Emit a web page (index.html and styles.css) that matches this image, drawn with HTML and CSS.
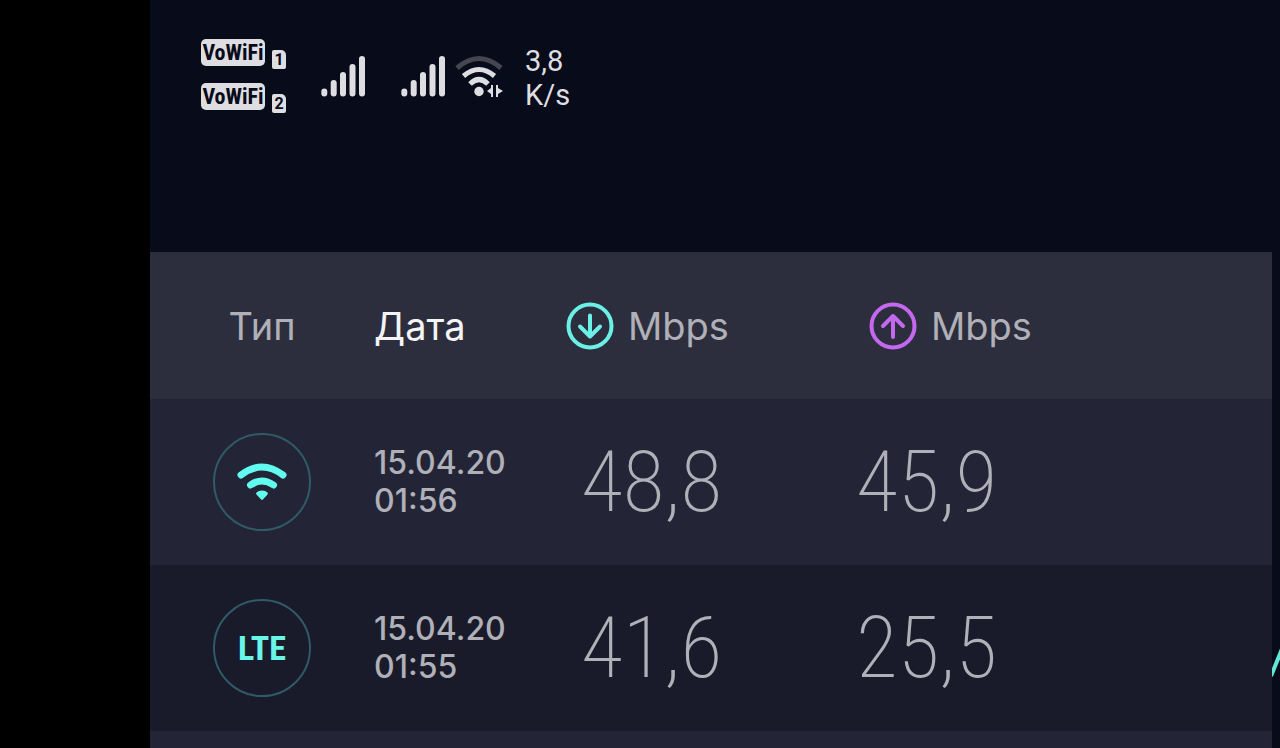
FILE: index.html
```html
<!DOCTYPE html>
<html lang="ru">
<head>
<meta charset="utf-8">
<meta name="viewport" content="width=device-width, initial-scale=1">
<title>Результаты</title>
<link rel="stylesheet" href="styles.css">
</head>
<body>
<div class="screen">
  <header class="status">
    <div class="vowifi">
      <div class="vowifi-row"><span class="vowifi-badge">VoWiFi</span><span class="sim">1</span></div>
      <div class="vowifi-row"><span class="vowifi-badge">VoWiFi</span><span class="sim">2</span></div>
    </div>
    <svg class="signal" viewBox="0 0 46 44" aria-hidden="true">
      <path d="M3.300 36.500v2M12.700 28v10.500M22 20v18.500M31.500 12v26.500M41 4v34.500"/>
    </svg>
    <svg class="signal" viewBox="0 0 46 44" aria-hidden="true">
      <path d="M3.300 36.500v2M12.700 28v10.500M22 20v18.500M31.500 12v26.500M41 4v34.500"/>
    </svg>
    <svg class="net-wifi" viewBox="0 0 50 44" aria-hidden="true">
      <path class="faint" d="M2 13Q24-6 46 13"/>
      <path d="M8.500 21Q24 8 39.500 21M15 29Q24 20 33 29"/>
      <circle cx="24" cy="36.500" r="4.700"/>
      <path class="solid" d="M38 30v12h-2v-3l-4-3 4-3v-3zM41 30l2 0v3l5 3-5 3v3h-2z"/>
    </svg>
    <div class="speed">3,8<br>K/s</div>
  </header>
  <main class="panel">
    <table class="results">
      <colgroup><col class="c-type"><col class="c-date"><col class="c-down"><col></colgroup>
      <thead>
        <tr>
          <th class="type" scope="col">Тип</th>
          <th class="sorted" scope="col">Дата</th>
          <th scope="col">
            <span class="unit"><svg class="arrow down" viewBox="0 0 48 48" aria-label="Загрузка"><circle cx="24" cy="24" r="21.500"/><path d="M24 13.500v20M14 24.500l10 10 10-10"/></svg>Mbps</span>
          </th>
          <th class="up-cell" scope="col">
            <span class="unit"><svg class="arrow up" viewBox="0 0 48 48" aria-label="Отдача"><circle cx="24" cy="24" r="21.500"/><path d="M24 35v-20M14 24l10-10 10 10"/></svg>Mbps</span>
          </th>
        </tr>
      </thead>
      <tbody>
        <tr>
          <td class="type"><span class="ring"><svg class="ring-wifi" viewBox="0 0 50 40" aria-label="Wi-Fi"><path d="M4 13Q25-3 46 13M13.500 23Q25 15 36.500 23"/><path class="solid" d="M25 28.500q3.500 0 5.500 2 1 1-.2 2.200l-4.200 4.600q-1.100 1.200-2.200 0l-4.200-4.600q-1.200-1.200-.2-2.200 2-2 5.500-2z"/></svg></span></td>
          <td class="date">15.04.20<br>01:56</td>
          <td class="value down-value">48,8</td>
          <td class="value">45,9</td>
        </tr>
        <tr class="alt">
          <td class="type"><span class="ring">LTE</span></td>
          <td class="date">15.04.20<br>01:55</td>
          <td class="value down-value">41,6</td>
          <td class="value">25,5</td>
        </tr>
      </tbody>
    </table>
    <svg class="trace" viewBox="0 0 8 36" aria-hidden="true"><path d="M-1 34L12 2"/></svg>
  </main>
</div>
</body>
</html>
```
FILE: styles.css
```css
* {
  box-sizing: border-box;
}

body {
  margin: 0;
  background: #000;
  color: #b0b0b8;
  font-family: Inter, "Noto Sans", sans-serif;
}

.screen {
  display: flex;
  flex-direction: column;
  min-height: 100vh;
  margin-left: 150px;
  background: #080b19;
}

.status {
  display: flex;
  align-items: flex-start;
  height: 252px;
  padding: 39px 51px;
  color: #dedee2;
}

.vowifi {
  display: grid;
  gap: 14px;
  width: 120px;
}

.vowifi-row {
  display: flex;
  align-items: flex-end;
  gap: 7px;
  height: 30px;
}

.vowifi-badge {
  align-self: flex-start;
  width: 64px;
  height: 27px;
  border-radius: 5px;
  background: #dedee2;
  color: #080b19;
  font: 700 22px/27px "Roboto Condensed", Roboto, sans-serif;
  text-align: center;
}

.sim {
  width: 14px;
  height: 19px;
  border-radius: 2px 5px 2px 2px;
  background: #dedee2;
  color: #080b19;
  font: 700 16px/19px Roboto, sans-serif;
  text-align: center;
}

.signal {
  width: 46px;
  height: 44px;
  margin: 16px 34px 0 0;
  fill: none;
  stroke: #dedee2;
  stroke-width: 6;
  stroke-linecap: round;
}

.signal + .signal {
  margin-right: 8px;
}

.net-wifi {
  width: 50px;
  height: 44px;
  margin: 16px 20px 0 0;
  fill: none;
  stroke: #dedee2;
  stroke-width: 5;
}

.net-wifi .faint {
  stroke: #44454f;
}

.net-wifi circle,
.net-wifi .solid {
  fill: #dedee2;
  stroke: none;
}

.speed {
  padding-top: 5px;
  font: 400 29px/34px Roboto, sans-serif;
}

.panel {
  position: relative;
  flex: 1;
  margin-right: 8px;
  background: #232436;
}

.results {
  width: 100%;
  border-collapse: collapse;
  table-layout: fixed;
}

.c-type {
  width: 224px;
}

.c-date {
  width: 192px;
}

.c-down {
  width: 290px;
}

.results th,
.results td {
  padding: 0;
  text-align: left;
}

.results th {
  height: 147px;
  background: #2d2e3d;
  font-size: 38px;
  font-weight: 400;
}

.results td {
  height: 166px;
}

.alt {
  background: #1a1b2a;
}

.results .type {
  text-align: center;
}

.results .sorted {
  color: #f4f4f6;
}

.results .up-cell {
  padding-left: 13px;
}

.unit {
  display: flex;
  align-items: center;
  gap: 14px;
}

.arrow {
  width: 48px;
  height: 48px;
  fill: none;
  stroke-width: 4;
  stroke-linecap: round;
  stroke-linejoin: round;
}

.down {
  stroke: #6af0e4;
}

.up {
  stroke: #c568f0;
}

.ring {
  display: flex;
  align-items: center;
  justify-content: center;
  width: 98px;
  height: 98px;
  margin: 0 auto;
  border: 2px solid #2f5a66;
  border-radius: 50%;
  color: #69f5e8;
  font: 700 34px/40px "Roboto Condensed", Roboto, sans-serif;
}

.ring-wifi {
  width: 50px;
  height: 40px;
  fill: none;
  stroke: #62fbf0;
  stroke-width: 7;
  stroke-linecap: round;
}

.ring-wifi .solid {
  fill: #62fbf0;
  stroke: none;
}

.date {
  font-size: 32px;
  font-weight: 500;
  line-height: 38px;
}

.value {
  font-family: "Roboto Condensed", Roboto, sans-serif;
  font-size: 86px;
  font-weight: 200;
  line-height: 100px;
}

.results .down-value {
  padding-left: 15px;
}

.trace {
  position: absolute;
  top: 390px;
  left: 100%;
  width: 8px;
  height: 36px;
  fill: none;
  stroke: #62e8d8;
  stroke-width: 4;
}
```
